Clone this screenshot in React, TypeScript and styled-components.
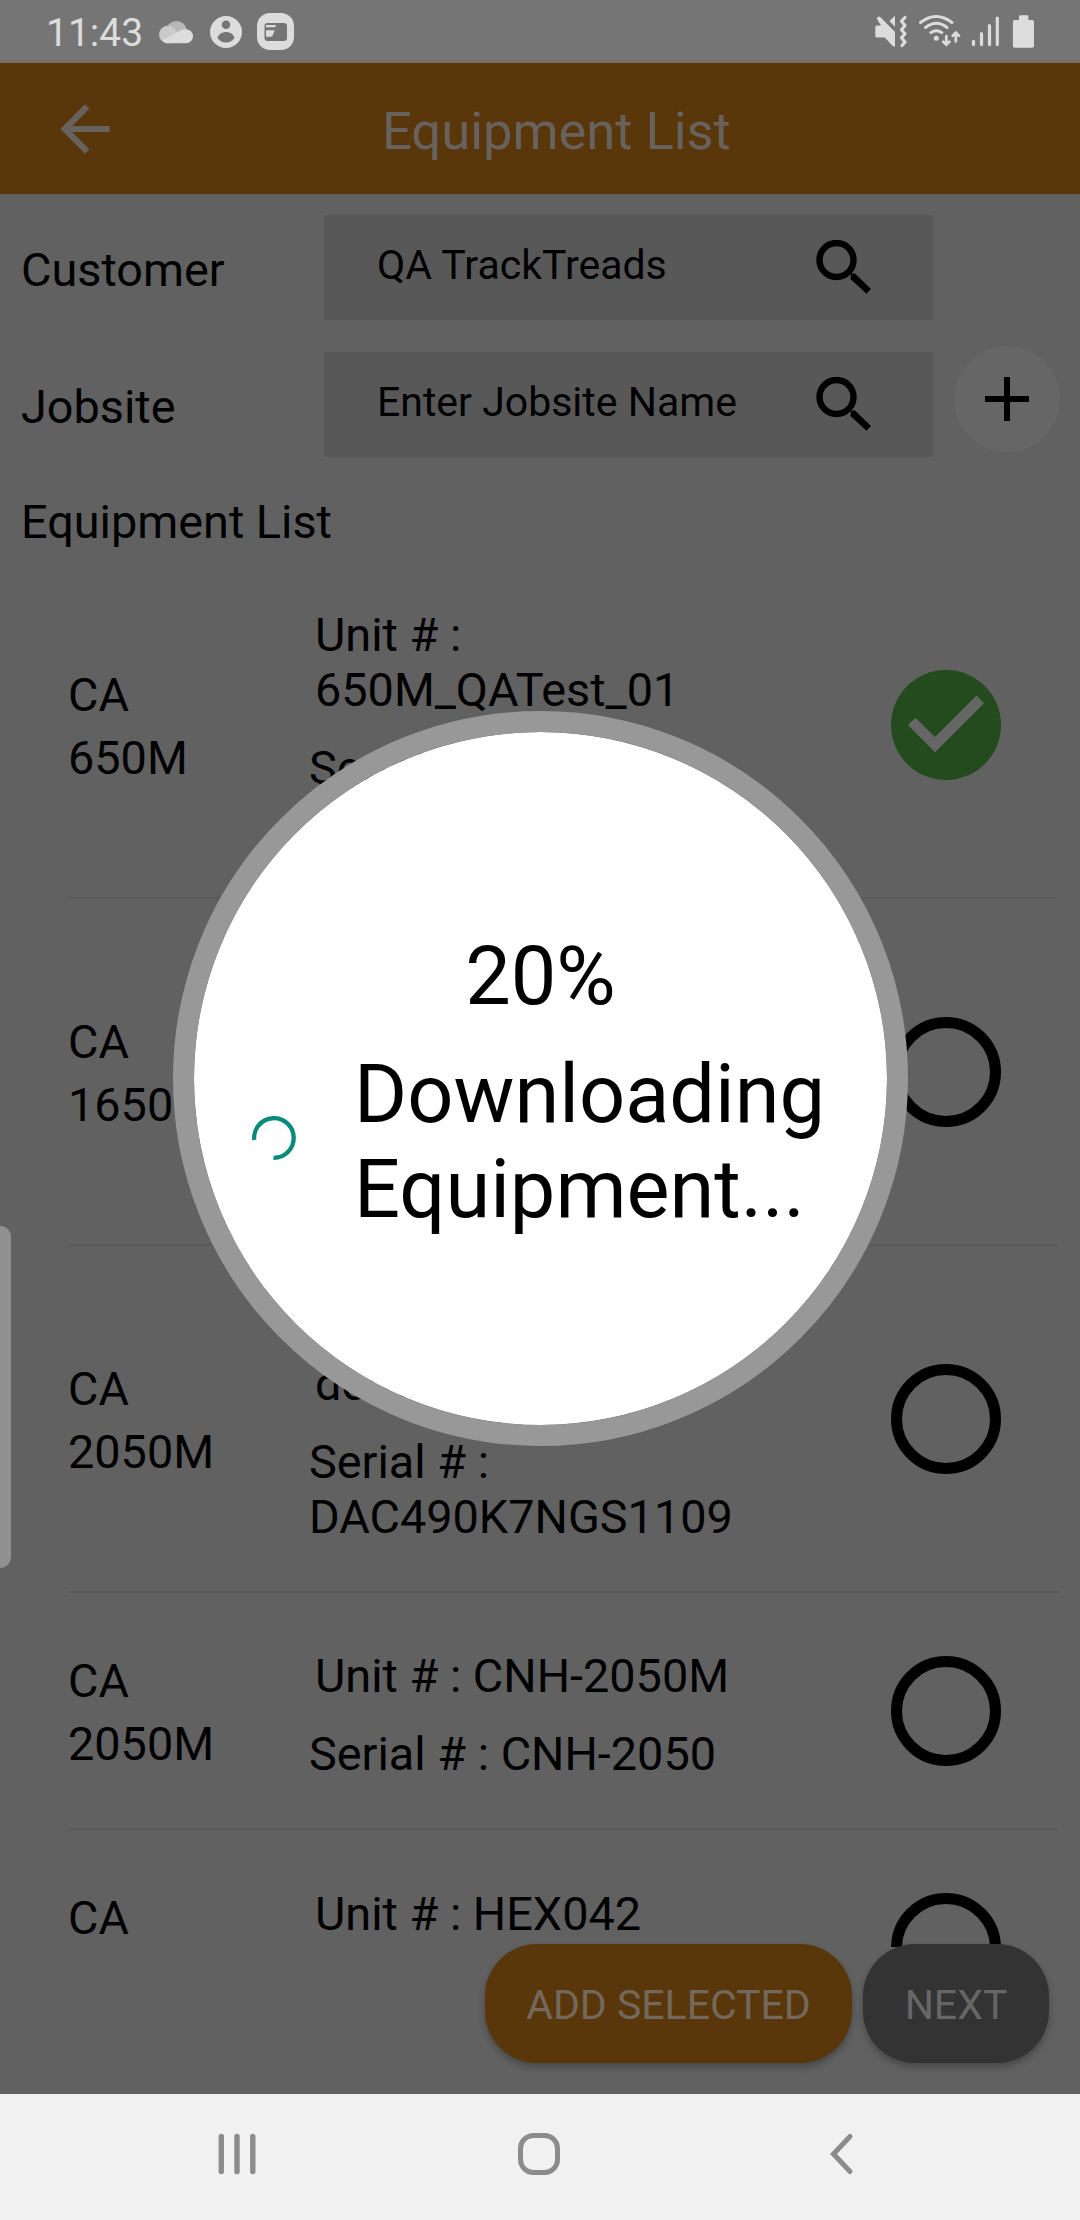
import React from "react";
import styled, { createGlobalStyle } from "styled-components";

const GlobalStyle = createGlobalStyle`
  * { box-sizing: border-box; }
  body { margin: 0; background: #616161; }
`;

const Screen = styled.div`
  position: relative;
  width: 1080px;
  height: 2220px;
  display: flex;
  flex-direction: column;
  overflow: hidden;
  background: #616161;
  color: #000;
  font-family: Roboto, "Noto Sans", sans-serif;
  font-size: 46.8px;
  line-height: 55.4px;
  white-space: nowrap;
  svg { display: block; flex: none; }
`;

const StatusBar = styled.header`
  height: 63px;
  flex: none;
  display: flex;
  align-items: flex-start;
  justify-content: space-between;
  padding: 10px 45px 0 46px;
  background: #757575;
  border-bottom: 2px solid #7b7067;
`;

const StatusGroup = styled.div`
  display: flex;
`;

const Clock = styled.span`
  width: 113px;
  font-size: 39px;
  line-height: 47px;
  color: #dcdcdc;
`;

const AppBar = styled.div`
  height: 131px;
  flex: none;
  display: flex;
  align-items: center;
  padding-left: 48px;
  background: #5a370b;
`;

const Title = styled.h1`
  margin: 4px 0 0 260px;
  font-size: 52.5px;
  line-height: 62px;
  font-weight: 400;
  color: #67625d;
`;

const Form = styled.section`
  flex: none;
  height: 358px;
  padding: 21px 20px 0 21px;
`;

const FieldRow = styled.div`
  display: flex;
  height: 105px;
  margin-bottom: 32px;
`;

const Label = styled.label`
  width: 303px;
  padding-top: 28px;
`;

const Field = styled.div`
  width: 609px;
  display: flex;
  justify-content: space-between;
  padding: 26px 60px 0 53px;
  background: #585858;
  font-size: 41px;
  line-height: 48px;
  svg { margin-top: -1px; }
`;

const AddJobsite = styled.button`
  width: 106px;
  height: 106px;
  margin: -6px 0 0 21px;
  padding: 0;
  border: 0;
  border-radius: 50%;
  display: grid;
  place-items: center;
  background: #666;
`;

const SectionTitle = styled.h2`
  margin: 0;
  padding-top: 6px;
  font: inherit;
`;

const List = styled.ul`
  flex: none;
  height: 1395px;
  margin: 0;
  padding: 0 21px 0 68px;
  overflow: hidden;
  list-style: none;
`;

const Row = styled.li<{ $tall?: boolean }>`
  height: ${(p) => (p.$tall ? 347 : 237)}px;
  display: flex;
  align-items: center;
  border-bottom: 2px solid #595959;
`;

const Model = styled.div`
  width: 241px;
  display: grid;
  gap: 7.6px;
  padding-top: 6px;
`;

const Details = styled.div<{ $tall?: boolean }>`
  width: 582px;
  min-height: ${(p) => (p.$tall ? 254 : 143)}px;
  padding-top: 10.5px;
`;

const Unit = styled.div<{ $tall?: boolean }>`
  min-height: ${(p) => (p.$tall ? 110.8 : 55.4)}px;
  margin-bottom: 22.3px;
  padding-left: 6px;
  white-space: pre-line;
`;

const Serial = styled.div`
  white-space: pre-line;
`;

const Radio = styled.div<{ $checked?: boolean }>`
  width: 110px;
  height: 110px;
  flex: none;
  display: grid;
  place-items: center;
  border-radius: 50%;
  border: ${(p) => (p.$checked ? "0" : "11px solid #000")};
  background: ${(p) => (p.$checked ? "#234b1d" : "transparent")};
`;

const Actions = styled.footer`
  flex: none;
  height: 147px;
  display: flex;
  justify-content: flex-end;
  gap: 11px;
  padding-right: 31px;
`;

const ActionButton = styled.button<{ $primary?: boolean }>`
  width: ${(p) => (p.$primary ? 367 : 186)}px;
  height: 119px;
  margin-top: -3px;
  padding: 2px 0 0;
  border: 0;
  border-radius: 52px;
  background: ${(p) => (p.$primary ? "#5a370b" : "#333")};
  color: ${(p) => (p.$primary ? "#73685c" : "#666")};
  box-shadow: 0 4px 7px rgba(0, 0, 0, 0.28);
  font: 400 41px/48px Roboto, "Noto Sans", sans-serif;
  position: relative;
`;

const NavBar = styled.nav`
  flex: none;
  height: 126px;
  display: flex;
  align-items: center;
  padding: 0 0 6px 215px;
  background: #f1f1f1;
`;

const NavKey = styled.div<{ $width: number }>`
  width: ${(p) => p.$width}px;
  flex: none;
`;

const EdgeHandle = styled.div`
  position: absolute;
  left: 0;
  top: 1226px;
  width: 11px;
  height: 342px;
  border-radius: 0 11px 11px 0;
  background: #919191;
`;

const ProgressDialog = styled.div`
  position: absolute;
  left: 173px;
  top: 711px;
  width: 735px;
  height: 735px;
  padding-top: 197px;
  border: 21px solid #989898;
  border-radius: 50%;
  background: #fff;
  background-clip: padding-box;
  font-size: 81.1px;
  line-height: 95.4px;
`;

const Percent = styled.div`
  text-align: center;
`;

const ProgressRow = styled.div`
  display: flex;
  align-items: center;
  gap: 58px;
  padding: 22.6px 0 0 58px;
  svg { margin-top: -8px; }
`;

const SearchIcon = () => (
  <svg width="58" height="58" viewBox="0 0 58 58">
    <circle cx="21.5" cy="20" r="17" fill="none" stroke="#000" strokeWidth="6.4" />
    <path d="M36 33.5h4L56 49l-4.6 4.7L35.5 39z" fill="#000" />
  </svg>
);

const items = [
  { model: "650M", unit: "Unit # :\n650M_QATest_01", serial: "Serial # :", tall: true, checked: true },
  { model: "1650M", unit: "Unit # :", serial: "Serial # :", tall: true },
  { model: "2050M", unit: "Unit # :\ndemo", serial: "Serial # :\nDAC490K7NGS1109", tall: true },
  { model: "2050M", unit: "Unit # : CNH-2050M", serial: "Serial # : CNH-2050" },
  { model: "", unit: "Unit # : HEX042", serial: "" },
];

export default function App() {
  return (
    <Screen>
      <GlobalStyle />
      <StatusBar>
        <StatusGroup>
          <Clock>11:43</Clock>
          <svg width="136" height="42" viewBox="159 10 136 42">
            <circle cx="176.5" cy="31.5" r="10.5" fill="#b7b7b7" />
            <circle cx="168" cy="34.5" r="9" fill="#cacaca" />
            <path d="M168 43.3h18a7 7 0 0 0 0-14q-5-.5-8 2.5l-15.500 8.500q2 3 5.500 3z" fill="#dcdcdc" />
            <circle cx="226" cy="32" r="16" fill="#dcdcdc" />
            <circle cx="226" cy="24.700" r="4.300" fill="#757575" />
            <path d="M217.500 38c2-8 15-8 17 0-4 6-13 6-17 0z" fill="#757575" />
            <rect x="257" y="13" width="37" height="37" rx="13" fill="#dcdcdc" />
            <rect x="264.500" y="23" width="22.500" height="18" rx="3" fill="#757575" />
            <path d="M266 25h10l-.8 2.300H266zM266 30.300h8.600l-1.800 5q-.6 1.500-2.300 1.500H266z" fill="#dcdcdc" />
          </svg>
        </StatusGroup>
        <svg width="160" height="42" viewBox="875 10 160 42" fill="#dcdcdc">
          <path d="M875.300 27q0-1.500 1.500-1.500h4.200l-4.300-6.800q1.500-3.500 3.800-1.500L895 32v14.500h-1.800l-8.400-9h-8q-1.500 0-1.500-1.500zM889.300 21l5.700-5.300v11z" />
          <path d="M905 17.500l-3.500 3.700 3.500 4.200-3.500 4.300 3.500 4-3.500 4 3.500 4.300-3 3.500" fill="none" stroke="#dcdcdc" strokeWidth="3.200" strokeLinecap="round" strokeLinejoin="round" />
          <g fill="none" stroke="#dcdcdc" strokeWidth="2.900" strokeLinecap="round">
            <path d="M920.500 22.500q15.500-12 31.500 0M925.500 27.500q11-8.500 21.500 0M930.800 32.700q5.500-4 11 0" />
            <path d="M946.300 36v8M943.200 41.700l3.100 3 3.100-3M955.800 41.500v-8M952.700 35.700l3.100-3 3.100 3" strokeWidth="2.700" />
          </g>
          <circle cx="936.300" cy="38.300" r="2.500" />
          <path d="M973.500 41.300v3.300M981.500 33.500v11.100M989.500 25.500v19.100M997.300 18v26.600" stroke="#dcdcdc" strokeWidth="3.200" strokeLinecap="round" />
          <path d="M1019 20v-3.500q0-1.200 1.200-1.200h7q1.200 0 1.200 1.200V20h3.800q1.800 0 1.800 1.800v24q0 1.900-1.800 1.900h-17.500q-1.800 0-1.800-1.900v-24q0-1.800 1.800-1.800z" />
        </svg>
      </StatusBar>

      <AppBar>
        <svg width="74" height="74" viewBox="0 0 24 24" fill="#67625d">
          <path d="M20 11H7.830l5.590-5.590L12 4l-8 8 8 8 1.410-1.410L7.830 13H20v-2z" />
        </svg>
        <Title>Equipment List</Title>
      </AppBar>

      <Form>
        <FieldRow>
          <Label>Customer</Label>
          <Field><span>QA TrackTreads</span><SearchIcon /></Field>
        </FieldRow>
        <FieldRow>
          <Label>Jobsite</Label>
          <Field><span>Enter Jobsite Name</span><SearchIcon /></Field>
          <AddJobsite aria-label="Add jobsite">
            <svg width="44" height="44" viewBox="0 0 44 44">
              <path d="M22 0v44M0 22h44" stroke="#000" strokeWidth="6" />
            </svg>
          </AddJobsite>
        </FieldRow>
        <SectionTitle>Equipment List</SectionTitle>
      </Form>

      <List>
        {items.map((item, i) => (
          <Row key={i} $tall={item.tall}>
            <Model>
              <span>CA</span>
              <span>{item.model || "\u00a0"}</span>
            </Model>
            <Details $tall={item.tall}>
              <Unit $tall={item.tall}>{item.unit}</Unit>
              <Serial>{item.serial}</Serial>
            </Details>
            <Radio $checked={item.checked}>
              {item.checked && (
                <svg width="110" height="110" viewBox="0 0 110 110" fill="#666">
                  <path d="M17 55l7.500-7.300L44 67l41.500-41.500 7.500 7.800-49 49z" />
                </svg>
              )}
            </Radio>
          </Row>
        ))}
      </List>

      <Actions>
        <ActionButton $primary>ADD SELECTED</ActionButton>
        <ActionButton>NEXT</ActionButton>
      </Actions>

      <NavBar>
        <NavKey $width={302}>
          <svg width="44" height="44" viewBox="0 0 44 44">
            <path d="M6.300 4.500v35M22 4.500v35M37.800 4.500v35" stroke="#8c8c8c" strokeWidth="5.400" strokeLinecap="round" />
          </svg>
        </NavKey>
        <NavKey $width={310}>
          <svg width="44" height="44" viewBox="0 0 44 44">
            <rect x="3.500" y="3.500" width="37" height="37" rx="13" fill="none" stroke="#8c8c8c" strokeWidth="5" />
          </svg>
        </NavKey>
        <NavKey $width={29}>
          <svg width="29" height="44" viewBox="0 0 29 44">
            <path d="M23 4.500L6.500 22 23 39.500" fill="none" stroke="#8c8c8c" strokeWidth="5" strokeLinecap="round" />
          </svg>
        </NavKey>
      </NavBar>

      <EdgeHandle />
      <ProgressDialog role="dialog">
        <Percent>20%</Percent>
        <ProgressRow>
          <svg width="44" height="44" viewBox="0 0 44 44">
            <path d="M2.200 24A19.800 19.800 0 1 1 21.500 41.800" fill="none" stroke="#0a8a7b" strokeWidth="4.300" />
          </svg>
          <div>Downloading<br />Equipment...</div>
        </ProgressRow>
      </ProgressDialog>
    </Screen>
  );
}
